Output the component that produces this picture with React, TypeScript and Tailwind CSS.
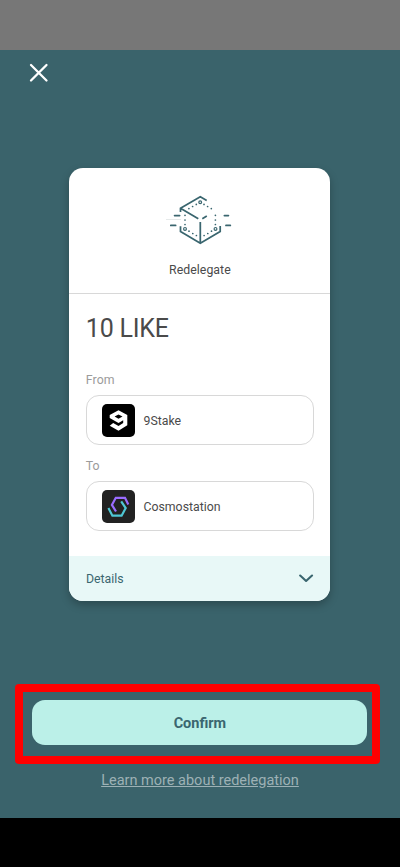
import React from "react";

function CubeIcon() {
  return (
    <svg className="block" width="80" height="65" viewBox="160 185 80 65" fill="none" stroke="#3a666f" strokeWidth="1.75">
      <path d="M206.7 200.5 200.3 196.8 180.5 208.3V212M180.5 208.3 198.3 218.8M202.3 218.8 206.8 216.1M200.3 222V243M180.5 226.3V231.6L200.3 243.2 220.2 231.6V226" />
      <path d="M174.6 215.6H179.6M170.8 225.4H175.6M224.4 215.6H228.4M226 225.4H230.3" strokeLinecap="round" strokeWidth="1.8" />
      <path d="M166 219.5H181" stroke="#e6eaea" strokeWidth="1" />
      <g strokeWidth="1.2">
        <circle cx="200.2" cy="202.2" r="1.4" />
        <circle cx="185" cy="228.9" r="1.4" />
        <circle cx="215.5" cy="228.9" r="1.4" />
      </g>
      <path
        d="M196.3 204.4h.01M192.6 206.5h.01M188.9 208.6h.01M204 204.4h.01M207.6 206.5h.01M211.3 208.6h.01M185 215.3h.01M185 220h.01M185 224.5h.01M215.4 215.3h.01M215.4 220h.01M215.4 224.5h.01M189 231.2h.01M192.8 233.5h.01M196.4 235.5h.01M204.1 235.5h.01M207.8 233.5h.01M211.5 231.2h.01"
        strokeLinecap="round"
        strokeWidth="1.7"
      />
    </svg>
  );
}

function NineLogo() {
  return (
    <svg className="block shrink-0" width="33" height="33" viewBox="0 0 33 33">
      <rect width="33" height="33" rx="5" fill="#000" />
      <path
        d="M16.5 6.2 25.3 11V21.3L16.5 26.7 7.7 21.7 11.2 18.9 16.5 22 21.2 19.1V16.3L16.5 19 7.7 13.9V11ZM16.5 10.4 12.6 12.5 16.5 14.8 20.5 12.5Z"
        fill="#fff"
        fillRule="evenodd"
      />
    </svg>
  );
}

function CosmoLogo() {
  return (
    <svg className="block shrink-0" width="33" height="33" viewBox="0 0 33 33" fill="none" strokeWidth="2.2">
      <rect width="33" height="33" rx="5" fill="#222222" />
      <path d="M14 21.5 9.9 14.9 13.8 7.8H23L26.3 14.6" stroke="#9b6cff" />
      <path d="M19.2 11.3 23.7 18.1 19.6 25.7H10.4L6.4 18.1" stroke="#4fc8d5" />
    </svg>
  );
}

function Validator({ label, name, logo }: { label: string; name: string; logo: React.ReactNode }) {
  return (
    <div className="h-[86.3px]">
      <div className="h-[22.5px] text-[12.3px] leading-[15px] tracking-[0.1px] text-[#9b9b9b]">{label}</div>
      <div className="flex h-[50px] items-center gap-2 rounded-[13px] border border-[#d8d8d8] px-[15.7px] text-[12.3px] text-[#4a4a4a]">
        {logo}
        <span className="pt-[2px]">{name}</span>
      </div>
    </div>
  );
}

export default function App() {
  return (
    <div className="flex h-[867px] w-[400px] flex-col overflow-hidden bg-black font-['Roboto',sans-serif]">
      <div className="h-[50px] shrink-0 bg-[#777777]" />
      <main className="flex h-[768px] shrink-0 flex-col bg-[#3a636b]">
        <header className="h-[118.4px] shrink-0 pl-[29px] pt-[13px]">
          <svg width="20" height="20" viewBox="0 0 20 20" stroke="#fff" strokeWidth="2.3" strokeLinecap="round">
            <path d="M2 2 17.5 17.5M17.5 2 2 17.5" />
          </svg>
        </header>
        <section className="ml-[69.4px] flex h-[432.2px] w-[261px] shrink-0 flex-col overflow-hidden rounded-[14px] bg-white shadow-[0_4px_8px_rgba(0,0,0,0.25)]">
          <div className="flex h-[125.5px] shrink-0 flex-col items-center border-b border-[#d8d8d8] pt-[16.6px]">
            <CubeIcon />
            <div className="mt-[12px] text-[12.3px] leading-[16px] tracking-[0.05px] text-[#4a4a4a]">Redelegate</div>
          </div>
          <div className="flex-1 px-[16.4px]">
            <div className="h-[78.7px] pt-[19px] text-[25px] leading-[32px] tracking-[-0.2px] text-[#4a4a4a]">10 LIKE</div>
            <Validator label="From" name="9Stake" logo={<NineLogo />} />
            <Validator label="To" name="Cosmostation" logo={<CosmoLogo />} />
          </div>
          <div className="flex h-[44.5px] shrink-0 items-center justify-between bg-[#e8f8f7] px-[16.5px] text-[12.3px] text-[#3a666f]">
            <span className="pt-[2px]">Details</span>
            <svg width="15" height="9" viewBox="0 0 15 9" fill="none" stroke="#3a666f" strokeWidth="2.1" strokeLinecap="round" strokeLinejoin="round">
              <path d="M1.2 1.5 7.1 7 13 1.5" />
            </svg>
          </div>
        </section>
        <div className="ml-[15px] mt-[83px] h-[80px] w-[365px] shrink-0 rounded-[4px] bg-[#ff0000] p-[8px]">
          <div className="h-full bg-[#3a636b] pl-[9.4px] pt-[8.4px]">
            <button className="block h-[45px] w-[335px] rounded-[13px] bg-[#bbf0e8] pt-[2px] text-[14.5px] font-bold text-[#3a666f]">Confirm</button>
          </div>
        </div>
        <a className="mt-[7px] text-center text-[14.5px] leading-[20px] text-[#9db1b5] underline">Learn more about redelegation</a>
      </main>
    </div>
  );
}
